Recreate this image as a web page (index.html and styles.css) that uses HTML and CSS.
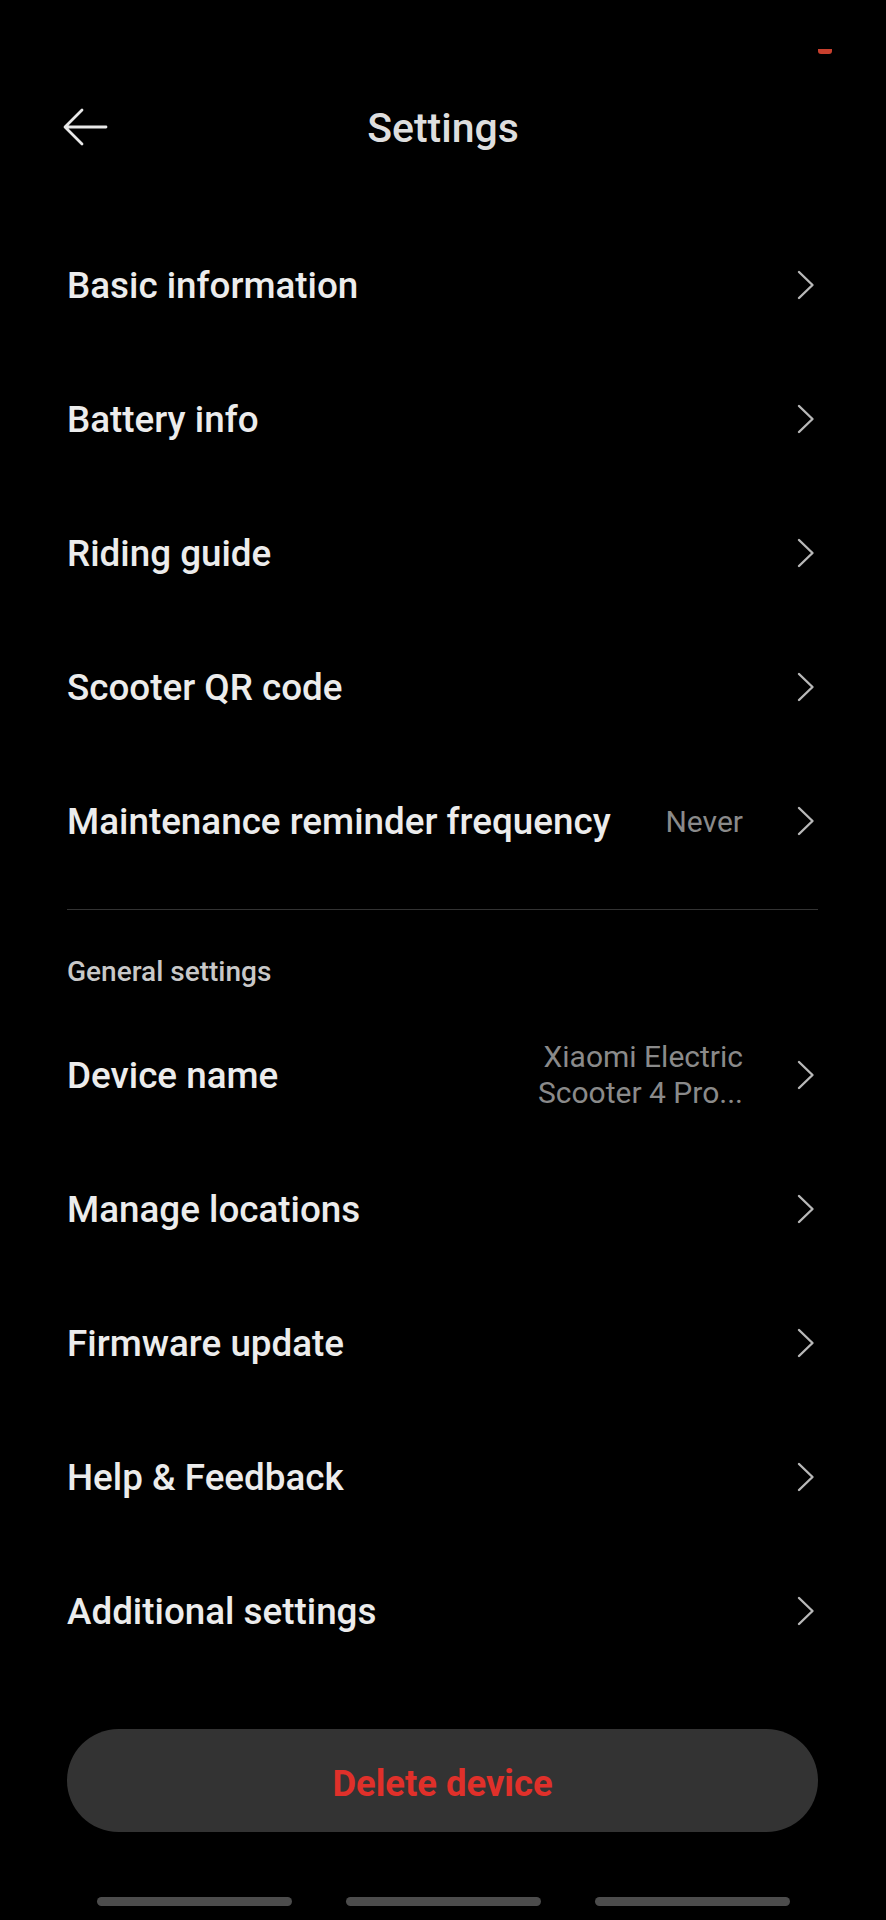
FILE: index.html
```html
<!DOCTYPE html>
<html lang="en">
<head>
    <meta charset="UTF-8">
    <meta name="viewport" content="width=device-width, initial-scale=1.0">
    <title>Settings</title>
    <link rel="stylesheet" href="styles.css">
</head>
<body>

    <!-- Status bar -->
    <div class="status-bar">
        <span class="rec-dot"></span>
    </div>

    <!-- Header -->
    <div class="header">
        <svg class="back" width="46" height="40" viewBox="0 0 46 40">
            <path d="M44 20 H4 M20 3 L3 20 L20 37" fill="none" stroke="#e8e8e8" stroke-width="2.8" stroke-linecap="round" stroke-linejoin="round"/>
        </svg>
        <h1>Settings</h1>
    </div>

    <ul class="menu first">
        <li><span class="label">Basic information</span><svg class="chev" viewBox="0 0 18 30"><path d="M2 2 L15.5 15 L2 28"/></svg></li>
        <li><span class="label">Battery info</span><svg class="chev" viewBox="0 0 18 30"><path d="M2 2 L15.5 15 L2 28"/></svg></li>
        <li><span class="label">Riding guide</span><svg class="chev" viewBox="0 0 18 30"><path d="M2 2 L15.5 15 L2 28"/></svg></li>
        <li><span class="label">Scooter QR code</span><svg class="chev" viewBox="0 0 18 30"><path d="M2 2 L15.5 15 L2 28"/></svg></li>
        <li><span class="label">Maintenance reminder frequency</span><span class="value">Never</span><svg class="chev" viewBox="0 0 18 30"><path d="M2 2 L15.5 15 L2 28"/></svg></li>
    </ul>

    <div class="divider"></div>

    <div class="section-title">General settings</div>

    <ul class="menu">
        <li><span class="label">Device name</span><span class="value multi">Xiaomi Electric<br>Scooter 4 Pro...</span><svg class="chev" viewBox="0 0 18 30"><path d="M2 2 L15.5 15 L2 28"/></svg></li>
        <li><span class="label">Manage locations</span><svg class="chev" viewBox="0 0 18 30"><path d="M2 2 L15.5 15 L2 28"/></svg></li>
        <li><span class="label">Firmware update</span><svg class="chev" viewBox="0 0 18 30"><path d="M2 2 L15.5 15 L2 28"/></svg></li>
        <li><span class="label">Help &amp; Feedback</span><svg class="chev" viewBox="0 0 18 30"><path d="M2 2 L15.5 15 L2 28"/></svg></li>
        <li><span class="label">Additional settings</span><svg class="chev" viewBox="0 0 18 30"><path d="M2 2 L15.5 15 L2 28"/></svg></li>
    </ul>

    <button class="delete-btn">Delete device</button>

    <!-- Navigation bar -->
    <div class="nav-bar">
        <span></span>
        <span></span>
        <span></span>
    </div>

</body>
</html>
```

FILE: styles.css
```css
body {
    margin: 0;
    width: 886px;
    height: 1920px;
    background-color: #000;
    font-family: Roboto, "Noto Sans", sans-serif;
    color: #e8e8e8;
    overflow: hidden;
}
.status-bar {
    height: 80px;
    display: flex;
    justify-content: flex-end;
    padding-right: 54px;
}
.rec-dot {
    width: 14px;
    height: 5px;
    margin-top: 49px;
    background-color: #c8402e;
    border-radius: 0 0 3px 3px;
}
.header {
    height: 96px;
    display: flex;
    align-items: center;
    justify-content: center;
    position: relative;
}
.header .back {
    position: absolute;
    left: 62px;
    top: 27px;
}
.header h1 {
    margin: 0;
    font-size: 41px;
    font-weight: 500;
    color: #dedede;
}
.menu {
    list-style-type: none;
    margin: 0;
    padding: 0 68px 0 67px;
}
.menu.first {
    margin-top: 42px;
}
.menu li {
    height: 134px;
    display: flex;
    align-items: center;
}
.menu .label {
    flex: 1;
    font-size: 36.8px;
    font-weight: 500;
    color: #ececec;
}
.menu .value {
    font-size: 30px;
    color: #8a8a8a;
    margin-right: 54px;
    text-align: right;
}
.menu .value.multi {
    line-height: 36px;
}
.chev {
    width: 18px;
    height: 30px;
    margin-right: 3px;
    fill: none;
    stroke: #b8b8b8;
    stroke-width: 2.4;
    stroke-linecap: round;
    stroke-linejoin: round;
}
.divider {
    height: 1px;
    background-color: #333;
    margin: 21px 68px 0 67px;
}
.section-title {
    height: 98px;
    box-sizing: border-box;
    padding: 17px 0 0 67px;
    line-height: 90px;
    font-size: 28px;
    font-weight: 500;
    color: #c8c8c8;
}
.delete-btn {
    display: block;
    width: 751px;
    height: 103px;
    margin: 51px 0 0 67px;
    border: none;
    border-radius: 52px;
    background-color: #333;
    color: #e0302a;
    font-family: Roboto, "Noto Sans", sans-serif;
    font-size: 36.4px;
    font-weight: 700;
    padding-top: 6px;
}
.nav-bar {
    display: flex;
    justify-content: center;
    gap: 54px;
    margin-top: 65px;
}
.nav-bar span {
    width: 195px;
    height: 9px;
    border-radius: 5px;
    background-color: #4c4c4c;
}
```
